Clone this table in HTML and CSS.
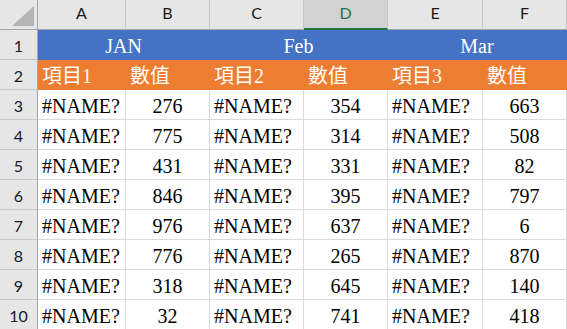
FILE: index.html
```html
<!DOCTYPE html>
<html>
<head>
<meta charset="utf-8">
<link rel="stylesheet" href="styles.css">
</head>
<body>
<div class="sheet">
  <div class="hd corner"><span class="tri"></span></div>
  <div class="hd col">A</div>
  <div class="hd col">B</div>
  <div class="hd col">C</div>
  <div class="hd col sel">D</div>
  <div class="hd col">E</div>
  <div class="hd col">F</div>

  <div class="hd row">1</div>
  <div class="c blue span2">JAN</div>
  <div class="c blue span2">Feb</div>
  <div class="c blue span2">Mar</div>

  <div class="hd row">2</div>
  <div class="c orange">項目1</div>
  <div class="c orange">數值</div>
  <div class="c orange">項目2</div>
  <div class="c orange">數值</div>
  <div class="c orange">項目3</div>
  <div class="c orange">數值</div>

  <div class="hd row">3</div>
  <div class="c">#NAME?</div><div class="c num">276</div>
  <div class="c">#NAME?</div><div class="c num">354</div>
  <div class="c">#NAME?</div><div class="c num">663</div>

  <div class="hd row">4</div>
  <div class="c">#NAME?</div><div class="c num">775</div>
  <div class="c">#NAME?</div><div class="c num">314</div>
  <div class="c">#NAME?</div><div class="c num">508</div>

  <div class="hd row">5</div>
  <div class="c">#NAME?</div><div class="c num">431</div>
  <div class="c">#NAME?</div><div class="c num">331</div>
  <div class="c">#NAME?</div><div class="c num">82</div>

  <div class="hd row">6</div>
  <div class="c">#NAME?</div><div class="c num">846</div>
  <div class="c">#NAME?</div><div class="c num">395</div>
  <div class="c">#NAME?</div><div class="c num">797</div>

  <div class="hd row">7</div>
  <div class="c">#NAME?</div><div class="c num">976</div>
  <div class="c">#NAME?</div><div class="c num">637</div>
  <div class="c">#NAME?</div><div class="c num">6</div>

  <div class="hd row">8</div>
  <div class="c">#NAME?</div><div class="c num">776</div>
  <div class="c">#NAME?</div><div class="c num">265</div>
  <div class="c">#NAME?</div><div class="c num">870</div>

  <div class="hd row">9</div>
  <div class="c">#NAME?</div><div class="c num">318</div>
  <div class="c">#NAME?</div><div class="c num">645</div>
  <div class="c">#NAME?</div><div class="c num">140</div>

  <div class="hd row">10</div>
  <div class="c">#NAME?</div><div class="c num">32</div>
  <div class="c">#NAME?</div><div class="c num">741</div>
  <div class="c">#NAME?</div><div class="c num">418</div>
</div>
</body>
</html>
```
FILE: styles.css
```css
html, body {
  margin: 0;
  padding: 0;
  background: #ffffff;
}
.sheet {
  display: grid;
  grid-template-columns: 38px 88px 84px 94px 84px 95px 84px;
  grid-auto-rows: 30px;
  width: 567px;
}
.hd {
  box-sizing: border-box;
  background: #e6e6e6;
  border-right: 1px solid #c6c6c6;
  border-bottom: 1px solid #c6c6c6;
  font-family: Lato, "Liberation Sans", sans-serif;
  font-size: 16px;
  color: #1a1a1a;
  display: flex;
  justify-content: center;
}
.corner {
  position: relative;
  border-bottom-color: #a6a6a6;
  border-right-color: #a6a6a6;
}
.tri {
  position: absolute;
  right: 3px;
  bottom: 3px;
  width: 0;
  height: 0;
  border-left: 22px solid transparent;
  border-bottom: 20px solid #b4b4b4;
}
.col {
  align-items: center;
  padding-bottom: 4px;
  border-bottom-color: #a6a6a6;
}
.col.sel {
  background: #d2d2d2;
  color: #217346;
  border-bottom: 2px solid #217346;
  padding-bottom: 3px;
}
.row {
  align-items: flex-end;
  padding-bottom: 4px;
  border-right-color: #a6a6a6;
}
.c {
  box-sizing: border-box;
  border-right: 1px solid #dadada;
  border-bottom: 1px solid #dadada;
  font-family: "Liberation Serif", "Noto Sans CJK TC", serif;
  font-size: 20px;
  line-height: 20px;
  color: #000;
  display: flex;
  align-items: flex-end;
  padding: 0 0 3px 4px;
  white-space: nowrap;
  overflow: hidden;
}
.num {
  justify-content: center;
  padding-left: 0;
}
.span2 {
  grid-column: span 2;
  justify-content: center;
  padding-left: 0;
}
.blue {
  background: #4472c4;
  border-color: #4472c4;
  color: #fff;
}
.orange {
  background: #ed7d31;
  border-color: #ed7d31;
  color: #fff;
}
```
